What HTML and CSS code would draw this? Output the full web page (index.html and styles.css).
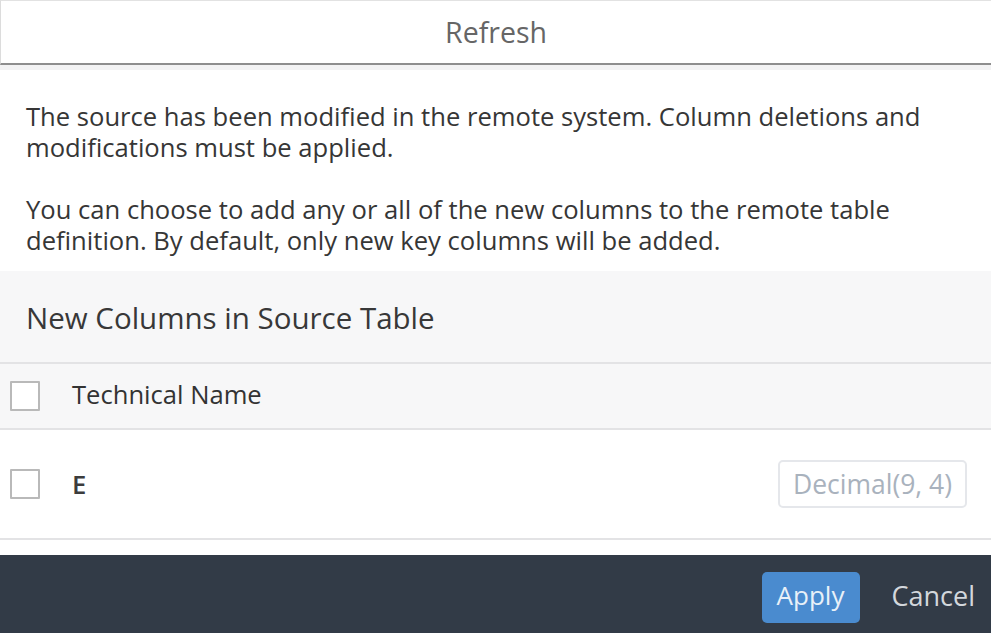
FILE: index.html
```html
<!DOCTYPE html>
<html lang="en">
<head>
<meta charset="utf-8">
<title>Refresh</title>
<link rel="stylesheet" href="styles.css">
</head>
<body>
<div class="dialog">
  <header class="dlg-header">
    <h1 class="dlg-title">Refresh</h1>
  </header>
  <div class="header-band"></div>
  <div class="dlg-content">
    <div class="intro">
      <p class="intro-text">The source has been modified in the remote system. Column deletions and modifications must be applied.</p>
      <p class="intro-text">You can choose to add any or all of the new columns to the remote table definition. By default, only new key columns will be added.</p>
    </div>
    <div class="section-title-bar">
      <h2 class="section-title">New Columns in Source Table</h2>
    </div>
    <div class="table">
      <div class="table-head">
        <span class="checkbox"></span>
        <span class="col-name head-label">Technical Name</span>
      </div>
      <div class="table-row">
        <span class="checkbox"></span>
        <span class="col-name row-label">E</span>
        <span class="type-token">Decimal(9, 4)</span>
      </div>
    </div>
    <div class="content-end"></div>
  </div>
  <footer class="dlg-footer">
    <button class="btn btn-primary" type="button">Apply</button>
    <button class="btn btn-ghost" type="button">Cancel</button>
  </footer>
</div>
</body>
</html>
```

FILE: styles.css
```css
* { box-sizing: border-box; }

html, body {
  margin: 0;
  padding: 0;
  background: #ffffff;
}

body {
  font-family: "Open Sans", "Noto Sans", sans-serif;
  color: #333333;
}

.dialog {
  width: 991px;
  height: 633px;
  display: flex;
  flex-direction: column;
  overflow: hidden;
}

.dlg-header {
  height: 65px;
  display: flex;
  align-items: center;
  justify-content: center;
  border-top: 1px solid #e2e2e2;
  border-left: 1px solid #dcdcdc;
  border-bottom: 2px solid #8e8e8e;
  background: #ffffff;
}

.dlg-title {
  margin: 0;
  font-size: 28.5px;
  font-weight: normal;
  color: #666666;
  padding-top: 0;
}

.header-band {
  height: 5px;
  background: #f3f3f4;
}

.dlg-content {
  flex: 1;
  display: flex;
  flex-direction: column;
}

.intro {
  padding: 31px 26px 15px 26px;
}

.intro-text {
  margin: 0 0 31px 0;
  font-size: 25.6px;
  line-height: 31px;
  color: #363636;
}

.intro-text:last-child {
  margin-bottom: 0;
}

.section-title-bar {
  height: 93px;
  background: #f7f7f8;
  display: flex;
  align-items: center;
  padding: 0 26px;
  border-bottom: 2px solid #e3e3e5;
}

.section-title {
  margin: 0;
  font-size: 29.5px;
  font-weight: normal;
  color: #383838;
  padding-top: 2px;
}

.table-head {
  height: 66px;
  background: #f7f7f8;
  border-bottom: 2px solid #e3e3e5;
  display: flex;
  align-items: center;
  padding-left: 10px;
}

.table-row {
  height: 110px;
  background: #ffffff;
  border-bottom: 2px solid #e3e3e5;
  display: flex;
  align-items: center;
  padding-left: 10px;
  padding-right: 24px;
}

.checkbox {
  width: 30px;
  height: 30px;
  border: 2px solid #b9b9b9;
  border-radius: 1px;
  background: #ffffff;
  flex: none;
}

.col-name {
  margin-left: 32px;
  font-size: 25.6px;
  color: #333333;
}

.head-label {
  margin-top: -3px;
}

.row-label {
  font-weight: 600;
  color: #3c3c3c;
}

.type-token {
  margin-left: auto;
  height: 48px;
  width: 189px;
  border: 2px solid #e5e7eb;
  border-radius: 5px;
  display: flex;
  align-items: center;
  justify-content: center;
  font-size: 26.5px;
  color: #a9b2bd;
}

.content-end {
  height: 15px;
  background: #ffffff;
}

.dlg-footer {
  flex: 1;
  background: #323b47;
  display: flex;
  align-items: center;
  justify-content: flex-end;
  padding: 0 16px 0 0;
  gap: 14px;
}

.btn {
  font-family: inherit;
  border: none;
  cursor: pointer;
}

.btn-primary {
  width: 98px;
  height: 51px;
  border-radius: 5px;
  background: #4a8bcf;
  color: #e8f0f8;
  margin-top: 6px;
  padding: 0 0 4px 0;
  font-size: 26px;
}

.btn-ghost {
  background: transparent;
  color: #d3d7dc;
  padding: 0 0 0 18px;
  margin-top: 2px;
  font-size: 27px;
}
```
